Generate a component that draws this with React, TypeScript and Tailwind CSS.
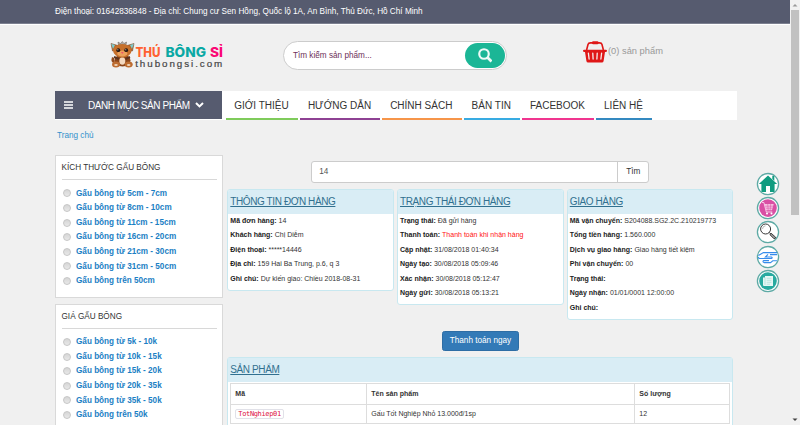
import React from "react";

const navItems = [
  { label: "GIỚI THIỆU", box: "w-[72px] border-[#7fcb5b]" },
  { label: "HƯỚNG DẪN", box: "w-[80px] border-[#8e4193]" },
  { label: "CHÍNH SÁCH", box: "w-[79.5px] border-[#f6954a]" },
  { label: "BẢN TIN", box: "w-[56.5px] border-[#38abe2]" },
  { label: "FACEBOOK", box: "w-[72px] border-[#f0358f]" },
  { label: "LIÊN HỆ", box: "w-[56px] border-[#3489c0]" },
];

const sizes = [
  "Gấu bông từ 5cm - 7cm",
  "Gấu bông từ 8cm - 10cm",
  "Gấu bông từ 11cm - 15cm",
  "Gấu bông từ 16cm - 20cm",
  "Gấu bông từ 21cm - 30cm",
  "Gấu bông từ 31cm - 50cm",
  "Gấu bông trên 50cm",
];

const prices = [
  "Gấu bông từ 5k - 10k",
  "Gấu bông từ 10k - 15k",
  "Gấu bông từ 15k - 20k",
  "Gấu bông từ 20k - 35k",
  "Gấu bông từ 35k - 50k",
  "Gấu bông trên 50k",
];

type Row = { k: string; v: string; red?: boolean };

const orderRows: Row[] = [
  { k: "Mã đơn hàng:", v: "14" },
  { k: "Khách hàng:", v: "Chị Diễm" },
  { k: "Điện thoại:", v: "*****14446" },
  { k: "Địa chỉ:", v: "159 Hai Ba Trung, p.6, q 3" },
  { k: "Ghi chú:", v: "Dự kiến giao: Chiều 2018-08-31" },
];

const statusRows: Row[] = [
  { k: "Trạng thái:", v: "Đã gửi hàng" },
  { k: "Thanh toán:", v: "Thanh toán khi nhận hàng", red: true },
  { k: "Cập nhật:", v: "31/08/2018 01:40:34" },
  { k: "Ngày tạo:", v: "30/08/2018 05:09:46" },
  { k: "Xác nhận:", v: "30/08/2018 05:12:47" },
  { k: "Ngày gửi:", v: "30/08/2018 05:13:21" },
];

const shippingRows: Row[] = [
  { k: "Mã vận chuyển:", v: "S204088.SG2.2C.210219773" },
  { k: "Tổng tiền hàng:", v: "1.560.000" },
  { k: "Dịch vụ giao hàng:", v: "Giao hàng tiết kiệm" },
  { k: "Phí vận chuyển:", v: "00" },
  { k: "Trạng thái:", v: "" },
  { k: "Ngày nhận:", v: "01/01/0001 12:00:00" },
  { k: "Ghi chú:", v: "" },
];

function FilterBox({ title, items, size }: { title: string; items: string[]; size: string }) {
  return (
    <section className={`border border-[#d9d9d9] bg-white px-[5.5px] ${size}`}>
      <h3 className="flex h-[24px] items-center border-b border-[#d8d8d8] pt-[1.5px] text-[8.2px] text-[#333]">{title}</h3>
      <ul className="pt-[6.2px]">
        {items.map((t) => (
          <li key={t} className="flex h-[14.55px] items-center">
            <span className="ml-[1.5px] h-[8px] w-[8px] rounded-full border border-[#c6c6c6] bg-linear-to-b from-[#d6d6d6] to-[#e8e8e8]" />
            <span className="ml-[5px] pt-px text-[8.17px] font-bold text-[#1b80c4]">{t}</span>
          </li>
        ))}
      </ul>
    </section>
  );
}

function PanelHeading({ children }: { children: string }) {
  return (
    <h2 className="flex h-[24px] items-center bg-[#d9edf5] pl-[2px] text-[10px] tracking-[-0.4px] text-[#31708f]">
      <span className="underline decoration-1 underline-offset-1">{children}</span>
    </h2>
  );
}

function Panel({ title, rows }: { title: string; rows: Row[] }) {
  return (
    <section className="w-[166.6px] overflow-hidden rounded-[3px] border border-[#c8e8f0] bg-white pb-[3.5px]">
      <PanelHeading>{title}</PanelHeading>
      <dl>
        {rows.map((r) => (
          <div key={r.k} className="flex h-[14.55px] items-center gap-[2px] pl-[2px] text-[7px] text-[#333]">
            <dt className="font-bold text-[#222]">{r.k}</dt>
            <dd className={r.red ? "text-[#f11]" : ""}>{r.v}</dd>
          </div>
        ))}
      </dl>
    </section>
  );
}

function Bear() {
  return (
    <svg className="h-[27px] w-[25px]" viewBox="0 0 25 27">
      <path d="M8.5 4 L8 1 L10.5 2.5 L12.3 .5 L14 2.5 L16.5 1 L16 4Z" fill="#aaa6a2" stroke="#66564d" strokeWidth=".5" />
      <path d="M1 2.5 L8 4.5 L6 10 L2.5 10Z" fill="#b5652a" stroke="#674329" strokeWidth=".5" />
      <path d="M24 2.5 L17 4.5 L19 10 L22.5 10Z" fill="#b5652a" stroke="#674329" strokeWidth=".5" />
      <path d="M1.2 2.8 L5 4 L3 8Z" fill="#7bcdd0" />
      <path d="M23.8 2.8 L20 4 L22 8Z" fill="#7bcdd0" />
      <path d="M2 16 Q0 22 5 22 L4 17Z" fill="#914a1c" />
      <ellipse cx="12.5" cy="19.5" rx="8" ry="6" fill="#8a4519" />
      <ellipse cx="12.3" cy="20" rx="3" ry="3.8" fill="#f3d9c0" />
      <ellipse cx="12.3" cy="9.8" rx="9.2" ry="6.8" fill="#c6702b" />
      <ellipse cx="12.3" cy="12.5" rx="5" ry="3" fill="#eba15c" />
      <circle cx="8.3" cy="9.2" r="1.9" fill="#24150f" />
      <circle cx="16.2" cy="9.2" r="1.9" fill="#24150f" />
      <circle cx="7.9" cy="8.7" r=".5" fill="#fff" />
      <circle cx="15.8" cy="8.7" r=".5" fill="#fff" />
      <path d="M11 11 H13.6 L12.3 13Z" fill="#ef526d" />
      <ellipse cx="6" cy="23.5" rx="4" ry="2.9" fill="#bd6c30" />
      <ellipse cx="18.7" cy="23.5" rx="4" ry="2.9" fill="#bd6c30" />
      <ellipse cx="6" cy="24" rx="1.8" ry="1.1" fill="#efd6bb" />
      <ellipse cx="18.7" cy="24" rx="1.8" ry="1.1" fill="#efd6bb" />
      <path d="M4 16 L9 18 M20 16 L15.5 18" stroke="#5e321c" strokeWidth="2" />
    </svg>
  );
}

function Logo() {
  return (
    <div className="flex h-[30px] w-[114px]">
      <Bear />
      <svg className="h-[30px] w-[89px] overflow-visible" viewBox="0 0 89 30">
        <g fontFamily="Inter, sans-serif" fontWeight="800" fontSize="13">
          <text x=".5" y="15.6" fill="#ff6231" textLength="25" lengthAdjust="spacingAndGlyphs">THÚ</text>
          <text x="30.5" y="15.6" fill="#0aa8a4" textLength="40.5" lengthAdjust="spacingAndGlyphs">BÔNG</text>
          <text x="75" y="15.6" fill="#fb0874" textLength="13" lengthAdjust="spacingAndGlyphs">SỈ</text>
        </g>
        <text x=".2" y="26" fill="#444" fontFamily="Liberation Sans, sans-serif" fontSize="9.8" textLength="87" stroke="#444" strokeWidth=".2">thubongsi.com</text>
      </svg>
    </div>
  );
}

function Basket() {
  return (
    <svg className="h-[22px] w-[24px]" viewBox="0 0 24 22">
      <path d="M3.6 9 L5 3.5 Q5.4 1.9 7.5 1.9 H16.5 Q18.6 1.9 19 3.5 L20.4 9" fill="none" stroke="#df1717" strokeWidth="1.6" />
      <rect x="9" y=".3" width="6.5" height="3" rx="1.2" fill="#df1717" />
      <path d="M1.2 8.7 H22.8 Q24 8.7 24 9.8 Q24 11 22.8 11 H22 L20.6 20 Q20.4 21.5 18.8 21.5 H5.2 Q3.6 21.5 3.4 20 L2 11 H1.2 Q0 11 0 9.8 Q0 8.7 1.2 8.7Z" fill="#df1717" />
      <path d="M5.4 12.2 L6.1 18 M9.8 12.2 L10.1 18 M14.2 12.2 L13.9 18 M18.6 12.2 L17.9 18" stroke="#f4eeee" strokeWidth="1.3" strokeLinecap="round" />
    </svg>
  );
}

function Round({ children }: { children: React.ReactNode }) {
  return (
    <svg className="h-[24.2px] w-[24px]" viewBox="0 0 24 24.2">
      <circle cx="12" cy="12.1" r="10.6" fill="#fff" stroke="#5eaaa5" strokeWidth="1.3" />
      {children}
    </svg>
  );
}

function QuickLinks() {
  return (
    <nav className="absolute top-[172px] left-[755.5px] flex flex-col">
      <Round>
        <path d="M12 3.4 L21.2 12 H18.6 V20 H14 V14 H10 V20 H5.4 V12 H2.8Z" fill="#109c80" />
        <path d="M16.3 4 H18.3 V9 L16.3 7Z" fill="#109c80" />
      </Round>
      <Round>
        <circle cx="12" cy="12.1" r="8.8" fill="#d94fa4" />
        <path d="M8.5 8 H17.7 L16 14.3 H10.2Z" fill="#f6bfe0" />
        <path d="M6 6.5 H7.9 L10.3 16 H16.3" fill="none" stroke="#fbd5ec" strokeWidth=".9" />
        <path d="M9.3 10.2 H17 M9.8 12.2 H16.5 M11.7 8 L12.2 14.3 M14.7 8 L14.2 14.3" stroke="#d94fa4" strokeWidth=".5" />
        <circle cx="11" cy="17.6" r="1" fill="#fff" />
        <circle cx="15.5" cy="17.6" r="1" fill="#fff" />
      </Round>
      <Round>
        <circle cx="9.6" cy="9" r="5" fill="#fff" stroke="#222" strokeWidth=".9" />
        <path d="M6.5 9 Q6.7 6 9.5 5.8" fill="none" stroke="#888" strokeWidth=".6" />
        <path d="M13.3 12.6 L15 14.2" stroke="#222" strokeWidth="1" />
        <path d="M15.2 13.3 L19.6 17.2 Q19.8 18.8 18 18.8 L14 14.8Z" fill="#999" stroke="#222" strokeWidth=".8" />
      </Round>
      <Round>
        <path d="M2.4 10.6 L7.4 7.6 H21 M21 15.8 H16.8 L14.5 17.6 H8.4 Q6.6 17.2 7.2 15.8 M21 9.6 H14 M12 9.4 L9.4 12 H15.4 Q17 12.7 15.4 13.5 H3.5 Q2.2 13 2.6 12 M7.2 15.6 H13" fill="none" stroke="#358ceb" strokeWidth="1.1" />
      </Round>
      <Round>
        <circle cx="12" cy="12.1" r="8.8" fill="#27aaa0" />
        <path d="M7 8.5 H9 V7 H17 V17 H8 Q7 17 7 16Z" fill="#e6f7f5" />
        <path d="M9 8.5 V16 M10.7 9.3 H15.4 M10.7 11.3 H15.4 M10.7 13.3 H15.4 M10.7 15.2 H14" stroke="#9bd7d2" strokeWidth=".6" />
      </Round>
    </nav>
  );
}

function Scrollbar() {
  return (
    <div className="flex h-[425px] w-[10px] flex-col items-center bg-[#f1f1f1]">
      <svg className="h-[10px] w-[10px]" viewBox="0 0 10 10"><path d="M2.5 6.5 L5 4 L7.5 6.5Z" fill="#999" /></svg>
      <div className="h-[205px] w-[8px] bg-[#c1c1c1]" />
      <svg className="mt-auto h-[10px] w-[10px]" viewBox="0 0 10 10"><path d="M2.5 3.5 L5 6 L7.5 3.5Z" fill="#444" /></svg>
    </div>
  );
}

export default function App() {
  return (
    <div className="relative flex h-[425px] w-[800px] overflow-hidden bg-[#f0f0f0] font-['Liberation_Sans',Arial,sans-serif] whitespace-nowrap">
      <div className="h-[425px] w-[790px] overflow-hidden">
        <div className="flex h-[24px] items-center border-b border-[#7c8090] bg-[#565b6f] pt-[2px] pl-[55px] text-[8.2px] text-white">
          <span>Điện thoại: 01642836848 - Địa chỉ: Chung cư Sen Hồng, Quốc lộ 1A, An Bình, Thủ Đức, Hồ Chí Minh</span>
        </div>
        <header className="flex h-[67px] border-t border-white pl-[110px]">
          <div className="mt-[16px]"><Logo /></div>
          <div className="mt-[16px] ml-[59px] flex h-[29px] w-[224px] items-center justify-between rounded-full border border-[#ccc] bg-white pr-[1px] pl-[9px]">
            <span className="pt-[1.5px] text-[8.2px] text-[#6d3159]">Tìm kiếm sản phẩm...</span>
            <span className="flex h-[24.5px] w-[40px] items-center justify-center rounded-full bg-[#1bb696]">
              <svg className="h-[14.5px] w-[14.5px]" viewBox="0 0 14 14"><circle cx="5.8" cy="5.8" r="4.6" fill="none" stroke="#eefaf7" strokeWidth="2.1" /><path d="M9.2 9.2 L13 13" stroke="#eefaf7" strokeWidth="2.6" /></svg>
            </span>
          </div>
          <div className="mt-[16px] ml-[76px] flex">
            <Basket />
            <span className="mt-[3px] ml-px text-[9.33px] leading-[14px] text-[#999]">(0) sản phẩm</span>
          </div>
        </header>

        <div className="ml-[55px] flex h-[28.5px] w-[682px] bg-white">
          <div className="flex h-[28px] w-[167px] items-center bg-[#565b6f] pl-[9px] text-[10px] text-white">
            <svg className="h-[8px] w-[9px]" viewBox="0 0 9 8"><path d="M0 1 H9 M0 4 H9 M0 7 H9" stroke="#fff" strokeWidth="1.5" /></svg>
            <span className="ml-[15px] pt-px tracking-[-0.43px]">DANH MỤC SẢN PHẨM</span>
            <svg className="ml-[5.5px] h-[6px] w-[9px]" viewBox="0 0 9 6"><path d="M1 1 L4.5 4.4 L8 1" fill="none" stroke="#fff" strokeWidth="2" /></svg>
          </div>
          <div className="ml-[4px] flex gap-[2px]">
            {navItems.map((n) => (
              <span key={n.label} className={`flex h-[29px] items-center justify-center border-b-2 pt-px pr-px text-[10px] text-[#333] ${n.box}`}>{n.label}</span>
            ))}
          </div>
        </div>

        <div className="mt-[9.5px] ml-[57px] h-[12px] pt-px text-[8.2px] leading-[12px] text-[#3390cc]">Trang chủ</div>

        <main className="ml-[55px] flex h-[280px] pt-[14px]">
          <aside className="flex w-[168px] flex-col gap-[6px]">
            <FilterBox title="KÍCH THƯỚC GẤU BÔNG" items={sizes} size="h-[142.5px] shrink-0" />
            <FilterBox title="GIÁ GẤU BÔNG" items={prices} size="h-[140px] shrink-0" />
          </aside>

          <div className="ml-[4.3px] w-[506px] pt-[5.5px]">
            <div className="ml-[83.5px] flex h-[22.5px] w-[338px] rounded-[3px] border border-[#ccc] bg-white text-[8.2px] text-[#555]">
              <span className="flex flex-1 items-center pt-px pl-[7.5px]">14</span>
              <span className="flex w-[31px] items-center justify-center border-l border-[#ccc] pt-px pl-px text-[#333]">Tìm</span>
            </div>
            <div className="mt-[5.5px] flex h-[131px] items-start gap-[3.2px]">
              <Panel title="THÔNG TIN ĐƠN HÀNG" rows={orderRows} />
              <Panel title="TRẠNG THÁI ĐƠN HÀNG" rows={statusRows} />
              <Panel title="GIAO HÀNG" rows={shippingRows} />
            </div>
            <button className="mt-[11px] ml-[214.7px] flex h-[20px] w-[77px] items-center justify-center rounded-[2.5px] border border-[#2e6da4] bg-[#337ab7] pt-[1.5px] text-[8.2px] text-white">Thanh toán ngay</button>
            <section className="mt-[6px] h-[80px] rounded-t-[3px] border border-[#c8e8f0] bg-white">
              <PanelHeading>SẢN PHẨM</PanelHeading>
              <div className="mx-[2px] mt-[1.5px] grid grid-cols-[136px_268px_1fr] border-t border-l border-[#ddd] text-[7px] text-[#333]">
                <span className="flex h-[20.5px] items-center border-r border-b-[1.5px] border-[#ddd] pl-[4px] font-bold">Mã</span>
                <span className="flex h-[20.5px] items-center border-r border-b-[1.5px] border-[#ddd] pl-[4px] font-bold">Tên sản phẩm</span>
                <span className="flex h-[20.5px] items-center border-r border-b-[1.5px] border-[#ddd] pl-[4px] font-bold">Số lượng</span>
                <span className="flex h-[19.5px] items-center border-r border-b border-[#ddd] pl-[4px]">
                  <code className="flex h-[10px] items-center rounded-[2px] border border-[#e1e1e8] px-[2px] pt-px font-['DejaVu_Sans_Mono',monospace] text-[7px] tracking-[-0.35px] text-[#dd1144]">TotNghiep01</code>
                </span>
                <span className="flex h-[19.5px] items-center border-r border-b border-[#ddd] pl-[4px]">Gấu Tốt Nghiệp Nhỏ 13.000đ/1sp</span>
                <span className="flex h-[19.5px] items-center border-r border-b border-[#ddd] pl-[4px]">12</span>
              </div>
            </section>
          </div>
        </main>
      </div>
      <Scrollbar />
      <QuickLinks />
    </div>
  );
}
